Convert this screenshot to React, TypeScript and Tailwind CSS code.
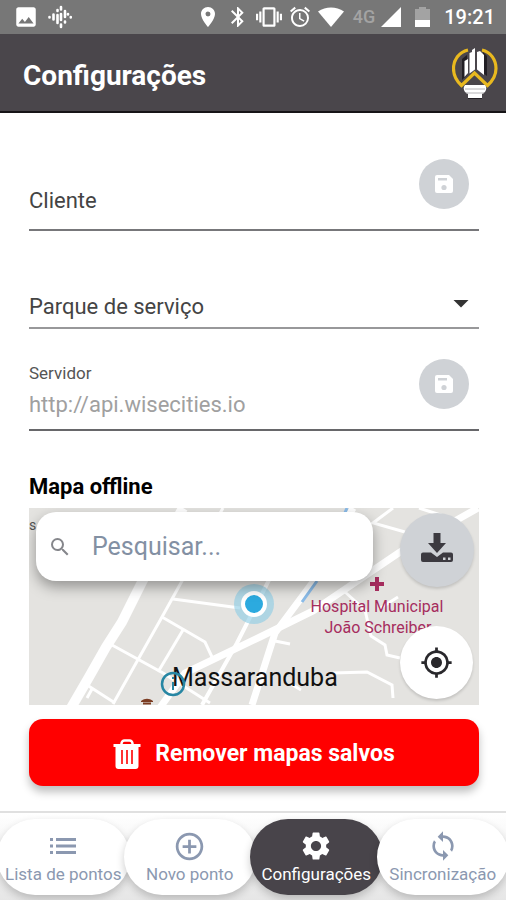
import { useState } from 'react';
import type { ReactNode } from 'react';
import {
  MdAddCircleOutline,
  MdAlarm,
  MdArrowDropDown,
  MdBluetooth,
  MdGpsFixed,
  MdImage,
  MdPlace,
  MdSearch,
  MdSettings,
  MdSync,
  MdVibration,
} from 'react-icons/md';

function AssistantIcon() {
  return (
    <svg viewBox="0 0 24 24" className="w-6 h-6" stroke="white" strokeWidth="2.6" strokeLinecap="round">
      <path d="M1.500 12v.4M5.500 9.500v5M9.500 5v1M9.500 10v8M13 2v2.500M13 9v6M13 19.500v2.500M17 6v6M17 16.500v1M20 9v.5M22.800 12v.4" />
    </svg>
  );
}

function Logo() {
  return (
    <svg viewBox="0 0 46 54" className="w-[46px] h-[54px] mt-[3px]" fill="none">
      <path d="M10 12l5-4v20l-5 5zM31 5l4 4v20l-4-3z" fill="#221f24" />
      <path d="M16 3C7 5 1.500 13 1.500 21.500c0 7 3 12.500 8 17L22.500 26l13 12.500c5-4.500 8.500-10 8.500-17C44 13 39 5 30 3" stroke="#e9b91f" strokeWidth="3.200" />
      <path d="M12.500 14l3.500-2v14l-3.500 4zM17.500 6l2.500-1V3l3-2v21.500l-5.500 4zM25 5l3-1 4 4v20l-7-5.500z" fill="white" />
      <path d="M13 38h20c2 2 1.500 5 0 7l-3 2v4H16v-4l-3-2c-1.500-2-2-5 0-7z" fill="white" />
      <path d="M13 42h20M14 46h18" stroke="#b5b4b7" strokeWidth="1" />
      <path d="M16 51.500h14" stroke="#221f24" strokeWidth="1" />
    </svg>
  );
}

function SaveIcon() {
  return (
    <svg viewBox="0 0 18 18" className="w-[18px] h-[18px]">
      <path d="M2 0h12l4 4v12a2 2 0 0 1-2 2H2a2 2 0 0 1-2-2V2a2 2 0 0 1 2-2z" fill="white" />
      <path d="M3 3h9v2.500H3z" fill="#cfd2d6" />
      <circle cx="9" cy="12.500" r="2.600" fill="#cfd2d6" />
    </svg>
  );
}

function DownloadIcon() {
  return (
    <svg viewBox="0 0 32 30" className="w-8 h-[30px]" fill="#3c3a40">
      <path d="M12.500 0h7v10H25l-9 10L7 10h5.500z" />
      <path d="M2 19.500h8l6 4.500 6-4.500h8a2 2 0 0 1 2 2V27a2 2 0 0 1-2 2H2a2 2 0 0 1-2-2v-5.500a2 2 0 0 1 2-2z" />
      <path d="M22 24.500h2.500V27H22zM27 24.500h2.500V27H27z" fill="#cfd2d6" />
    </svg>
  );
}

function TrashIcon() {
  return (
    <svg viewBox="0 0 28 30" className="w-7 h-[30px]" fill="none" stroke="white">
      <path d="M8.500 6V4.500a3 3 0 0 1 3-3h5a3 3 0 0 1 3 3V6" strokeWidth="2.500" />
      <path d="M0.500 5h27v3H25.500V27a3 3 0 0 1-3 3h-17a3 3 0 0 1-3-3V8H0.500z" fill="white" stroke="none" />
      <path d="M9 11v14M14 11v14M19 11v14" stroke="#f00" strokeWidth="1.600" />
    </svg>
  );
}

function ListIcon() {
  return (
    <svg viewBox="0 0 26 16" className="w-[26px] h-4" fill="currentColor">
      <path d="M0 0h3v3H0zM6 0h20v3H6zM0 6.500h3v3H0zM6 6.500h20v3H6zM0 13h3v3H0zM6 13h20v3H6z" />
    </svg>
  );
}

function StatusBar() {
  return (
    <div className="h-[34px] bg-[#777] text-white flex items-center justify-between pl-[13px] pr-[11px]">
      <div className="flex items-center gap-[9px]">
        <MdImage size={26} />
        <AssistantIcon />
      </div>
      <div className="flex items-center gap-[6px]">
        <MdPlace size={24} />
        <MdBluetooth size={24} />
        <MdVibration size={26} />
        <MdAlarm size={24} />
        <svg viewBox="0 0 26 20" className="w-[26px] h-5" fill="white">
          <path d="M0 4.500C8-1 18-1 26 4.500L13 20z" />
        </svg>
        <span className="self-start mt-[3px] ml-[3px] text-lg leading-5 font-medium text-[#a3a3a3]">4G</span>
        <svg viewBox="0 0 20 20" className="w-5 h-5" fill="white">
          <path d="M20 0v20H0z" />
        </svg>
        <svg viewBox="0 0 15 20" className="w-[15px] h-5 mx-2">
          <path d="M4 0h7v2h4v18H0V2h4z" fill="#a3a3a3" />
          <path d="M0 13h15v7H0z" fill="white" />
        </svg>
        <span className="text-xl leading-6 font-medium">19:21</span>
      </div>
    </div>
  );
}

function SaveButton({ label }: { label: string }) {
  return (
    <button
      type="button"
      aria-label={label}
      className="w-[50px] h-[50px] mr-[10px] shrink-0 rounded-full bg-[#cfd2d6] flex items-center justify-center"
    >
      <SaveIcon />
    </button>
  );
}

function OfflineMap() {
  const [search, setSearch] = useState('');

  return (
    <div className="relative h-[197px] overflow-hidden bg-[#e4e3e0]">
      <svg
        viewBox="0 0 450 197"
        preserveAspectRatio="xMidYMid slice"
        className="w-full h-full"
        fill="none"
        stroke="white"
        strokeWidth="3"
      >
        <path d="M154 0L114 72L93 114L77 139L60 169L42 200" strokeWidth="10" />
        <path d="M194 0L153 73L133 109L84 196" />
        <path d="M144 91L211 100M133 109L176 134L183 149M154 122L129 164M83 137L134 165L181 195M58 177L86 195M63 181L58 190" />
        <path d="M130 201L156 165L231 129L284 103L371 44L449 0" strokeWidth="7" />
        <path d="M324 0L284 74L246 125L223 197" strokeWidth="7" />
        <path d="M240 72L208 135L173 197" strokeWidth="4" />
        <path d="M364 0L344 15L376 24M390 0L424 11M316 84L336 102L342 128L356 137L358 147L371 150M369 89L350 101M246 133L261 136M262 176L272 182M304 165L338 164L363 177L364 190" />
        <path d="M288 73L273 94M318 0L315 7" stroke="#8bbce9" />
        <circle cx="225" cy="96" r="20" fill="#8bcbe4" fillOpacity="0.6" stroke="none" />
        <circle cx="225" cy="96" r="11" fill="#2caadf" strokeWidth="4" />
        <path d="M348 69v14M341 76h14" stroke="#a62d5e" strokeWidth="4" />
        <g stroke="none" fontFamily="Roboto, sans-serif">
          <text x="0" y="22" fontSize="14" fill="#555">s</text>
          <text x="348" y="104" fontSize="16" fill="#a62d5e" textAnchor="middle">Hospital Municipal</text>
          <text x="349" y="125" fontSize="16" fill="#a62d5e" textAnchor="middle">João Schreiber</text>
          <text x="143" y="178" fontSize="25" fill="#111">Massaranduba</text>
        </g>
        <circle cx="144" cy="176" r="11" stroke="#2786a3" strokeWidth="2.500" />
        <path d="M144 174v8M144 169v2" stroke="#2786a3" strokeWidth="2" />
        <path d="M112 193c4-3 8-3 12 0v1h-12z" fill="#7b3c22" stroke="none" />
        <path d="M114 195.500h8" stroke="#7b3c22" strokeWidth="2" />
      </svg>

      <label className="absolute left-[7px] top-1 right-[106px] h-[69px] rounded-[20px] bg-white shadow-[0_6px_14px_rgba(0,0,0,0.35)] flex items-center pl-3 gap-[20px] text-[#8390a3]">
        <MdSearch size={24} className="shrink-0 text-[#85868b]" />
        <input
          aria-label="Pesquisar"
          value={search}
          onChange={(e) => setSearch(e.target.value)}
          placeholder="Pesquisar..."
          className="w-full min-w-0 bg-transparent outline-none text-[25px] leading-8 text-[#444] placeholder:text-[#8390a3]"
        />
      </label>

      <button
        type="button"
        aria-label="Baixar mapa"
        className="absolute right-[5px] top-[5px] w-[74px] h-[74px] rounded-full bg-[#cfd2d6] shadow-[0_2px_3px_rgba(0,0,0,0.15)] flex items-center justify-center pb-1"
      >
        <DownloadIcon />
      </button>
      <button
        type="button"
        aria-label="Minha localização"
        className="absolute right-[6px] bottom-[6px] w-[73px] h-[73px] rounded-full bg-white shadow-[0_2px_3px_rgba(0,0,0,0.15)] flex items-center justify-center text-[#29282c]"
      >
        <MdGpsFixed size={33} />
      </button>
    </div>
  );
}

interface TabProps {
  icon: ReactNode;
  label: string;
  active?: boolean;
}

function Tab({ icon, label, active }: TabProps) {
  const colors = active ? 'bg-[#48444a] text-white' : 'bg-white text-[#8b98b0]';

  return (
    <button
      type="button"
      aria-current={active ? 'page' : undefined}
      className={`h-[76px] -mx-[3px] rounded-[38px] flex flex-col items-center justify-end pb-[9px] shadow-[0_4px_8px_rgba(0,0,0,0.2)] ${colors}`}
    >
      <span className="h-8 flex items-center">{icon}</span>
      <span className="text-[17px] leading-6 whitespace-nowrap">{label}</span>
    </button>
  );
}

export default function App() {
  const [client, setClient] = useState('');
  const [server, setServer] = useState('');

  return (
    <div className="min-h-screen flex flex-col bg-white font-[Roboto,sans-serif]">
      <StatusBar />

      <header className="h-[79px] bg-[#4a464b] border-b-2 border-[#161417] flex items-center justify-between pl-[23px] pr-2">
        <h1 className="pt-[6px] text-[28px] leading-8 font-bold text-white">Configurações</h1>
        <Logo />
      </header>

      <main className="flex-1 pl-[29px] pr-[27px] pt-[46px]">
        <div className="h-[72px] border-b-2 border-[#77777a] flex items-start">
          <input
            aria-label="Cliente"
            value={client}
            onChange={(e) => setClient(e.target.value)}
            placeholder="Cliente"
            className="flex-1 min-w-0 mt-[26px] bg-transparent outline-none text-[22px] leading-8 placeholder:text-[#444]"
          />
          <SaveButton label="Salvar cliente" />
        </div>

        <div className="relative h-[98px] border-b-2 border-[#98989a] flex items-end pb-1">
          <select
            aria-label="Parque de serviço"
            className="w-full appearance-none bg-transparent outline-none text-[22px] leading-8 text-[#444]"
          >
            <option>Parque de serviço</option>
          </select>
          <MdArrowDropDown size={36} className="absolute right-0 bottom-[6px] text-[#333] pointer-events-none" />
        </div>

        <div className="h-[102px] pt-[30px] border-b-2 border-[#67676a] flex items-start">
          <div className="flex-1 min-w-0 flex flex-col gap-[2px]">
            <label htmlFor="server" className="text-[17px] leading-7 text-[#555]">Servidor</label>
            <input
              id="server"
              value={server}
              onChange={(e) => setServer(e.target.value)}
              placeholder="http://api.wisecities.io"
              className="w-full bg-transparent outline-none text-[22px] leading-8 placeholder:text-[#a0a0a0]"
            />
          </div>
          <SaveButton label="Salvar servidor" />
        </div>

        <h2 className="mt-10 mb-[5px] text-[22px] leading-8 font-bold text-black">Mapa offline</h2>
        <OfflineMap />

        <button
          type="button"
          className="mt-[14px] w-full h-[67px] rounded-[14px] bg-[#f00] shadow-[0_6px_8px_rgba(0,0,0,0.25)] flex items-center justify-center gap-[14px] pt-[2px] text-white text-[23px] leading-8 font-bold"
        >
          <TrashIcon />
          Remover mapas salvos
        </button>
      </main>

      <nav className="h-[89px] pt-[6px] border-t-2 border-[#e0e0e0] bg-linear-to-b from-white to-[#e6e6e6] grid grid-cols-4 overflow-hidden">
        <Tab icon={<ListIcon />} label="Lista de pontos" />
        <Tab icon={<MdAddCircleOutline size={33} />} label="Novo ponto" />
        <Tab icon={<MdSettings size={34} />} label="Configurações" active />
        <Tab icon={<MdSync size={32} />} label="Sincronização" />
      </nav>
    </div>
  );
}
